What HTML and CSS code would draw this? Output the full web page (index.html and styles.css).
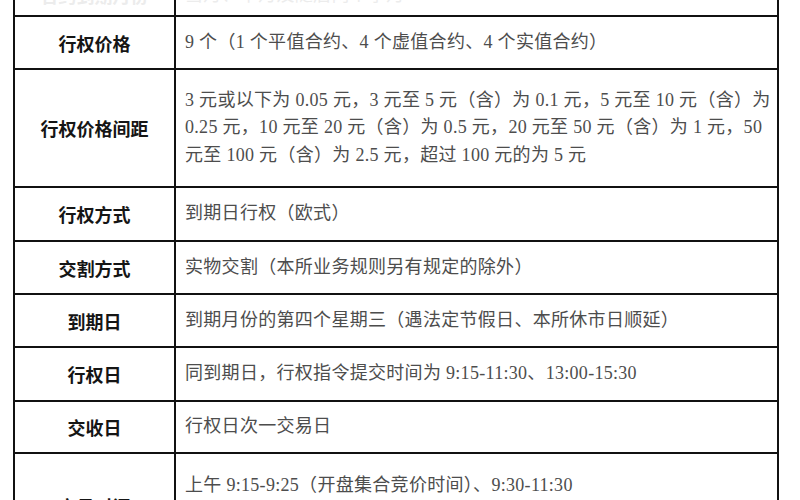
FILE: index.html
```html
<!DOCTYPE html>
<html lang="zh">
<head>
<meta charset="utf-8">
<link rel="stylesheet" href="styles.css">
</head>
<body>
<div class="page">
  <table class="spec">
    <tr class="r-top">
      <td class="label ghost">合约到期月份</td>
      <td class="value ghost">当月、下月及随后两个季月</td>
    </tr>
    <tr class="r53">
      <td class="label">行权价格</td>
      <td class="value">9 个（1 个平值合约、4 个虚值合约、4 个实值合约）</td>
    </tr>
    <tr class="r118">
      <td class="label">行权价格间距</td>
      <td class="value multi">3 元或以下为 0.05 元，3 元至 5 元（含）为 0.1 元，5 元至 10 元（含）为<br>0.25 元，10 元至 20 元（含）为 0.5 元，20 元至 50 元（含）为 1 元，50<br>元至 100 元（含）为 2.5 元，超过 100 元的为 5 元</td>
    </tr>
    <tr class="r54">
      <td class="label">行权方式</td>
      <td class="value">到期日行权（欧式）</td>
    </tr>
    <tr class="r53">
      <td class="label">交割方式</td>
      <td class="value">实物交割（本所业务规则另有规定的除外）</td>
    </tr>
    <tr class="r53">
      <td class="label">到期日</td>
      <td class="value">到期月份的第四个星期三（遇法定节假日、本所休市日顺延）</td>
    </tr>
    <tr class="r54">
      <td class="label">行权日</td>
      <td class="value">同到期日，行权指令提交时间为 9:15-11:30、13:00-15:30</td>
    </tr>
    <tr class="r52">
      <td class="label">交收日</td>
      <td class="value">行权日次一交易日</td>
    </tr>
    <tr class="r106">
      <td class="label">交易时间</td>
      <td class="value multi shifted">上午 9:15-9:25（开盘集合竞价时间）、9:30-11:30<br>下午 13:00-14:57（连续竞价时间）<br>14:57-15:00（收盘集合竞价时间）</td>
    </tr>
  </table>
</div>
</body>
</html>
```

FILE: styles.css
```css
html, body {
  margin: 0;
  padding: 0;
  background: #ffffff;
}

.page {
  width: 800px;
  height: 500px;
  overflow: hidden;
  padding-left: 13px;
  box-sizing: border-box;
}

.spec {
  border-collapse: collapse;
  width: 766px;
  margin-top: -38px;
  table-layout: fixed;
}

.spec td {
  border: 2px solid #111111;
  padding: 0;
  vertical-align: middle;
}

.label {
  width: 159px;
  text-align: center;
  font-family: "Noto Sans CJK SC", "Noto Sans", sans-serif;
  font-weight: 700;
  font-size: 18px;
  color: #151515;
}

.value {
  padding-left: 9px !important;
  font-family: "Liberation Serif", "Noto Sans CJK SC", serif;
  font-size: 18px;
  letter-spacing: 0.3px;
  color: #4d4d4d;
  line-height: 27.5px;
  white-space: nowrap;
}

.spec .shifted {
  padding-top: 14px;
}

.spec .ghost {
  color: #ececec;
  vertical-align: bottom;
  line-height: 20px;
  padding-bottom: 10px;
}

.r-top { height: 53px; }
.r53 { height: 53px; }
.r54 { height: 54px; }
.r52 { height: 52px; }
.r106 { height: 106px; }
.r118 { height: 118px; }
```
